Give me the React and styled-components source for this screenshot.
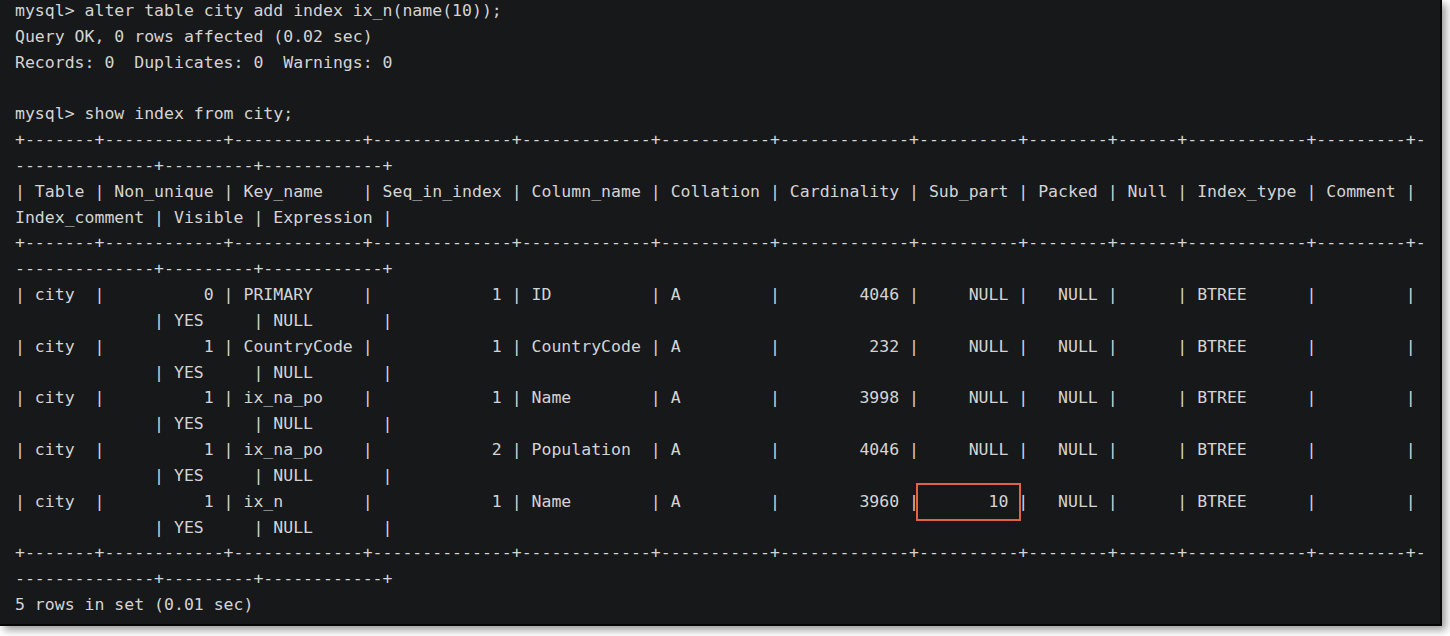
import React from "react";
import styled, { createGlobalStyle } from "styled-components";

const Global = createGlobalStyle`
  html, body { margin: 0; padding: 0; background: #ffffff; }
  body { width: 1450px; height: 636px; overflow: hidden; }
`;

const Terminal = styled.div`
  width: 1440px;
  height: 624px;
  background: #17181a;
  border-right: 2px solid #060606;
  border-bottom: 2px solid #060606;
  box-shadow: 4px 4px 8px rgba(0, 0, 0, 0.4);
  overflow: hidden;
  box-sizing: content-box;
`;

const Screen = styled.div`
  margin-top: -2px;
  padding-left: 15px;
  font-family: "DejaVu Sans Mono", "Liberation Mono", monospace;
  font-size: 16.5px;
  line-height: 25.83px;
  color: #d4d4d4;
`;

const Line = styled.div`
  height: 25.83px;
  white-space: pre;
`;

const Mark = styled.span`
  position: relative;
  display: inline-block;
  &::after {
    content: "";
    position: absolute;
    left: -3px;
    right: -3px;
    top: -6px;
    bottom: -6px;
    border: 2px solid #e0643f;
  }
`;

const COLS = [
  ["Table", "l"],
  ["Non_unique", "r"],
  ["Key_name", "l"],
  ["Seq_in_index", "r"],
  ["Column_name", "l"],
  ["Collation", "l"],
  ["Cardinality", "r"],
  ["Sub_part", "r"],
  ["Packed", "r"],
  ["Null", "l"],
  ["Index_type", "l"],
  ["Comment", "l"],
  ["Index_comment", "l"],
  ["Visible", "l"],
  ["Expression", "l"],
];

const ROWS = [
  ["city", "0", "PRIMARY", "1", "ID", "A", "4046", "NULL", "NULL", "", "BTREE", "", "", "YES", "NULL"],
  ["city", "1", "CountryCode", "1", "CountryCode", "A", "232", "NULL", "NULL", "", "BTREE", "", "", "YES", "NULL"],
  ["city", "1", "ix_na_po", "1", "Name", "A", "3998", "NULL", "NULL", "", "BTREE", "", "", "YES", "NULL"],
  ["city", "1", "ix_na_po", "2", "Population", "A", "4046", "NULL", "NULL", "", "BTREE", "", "", "YES", "NULL"],
  ["city", "1", "ix_n", "1", "Name", "A", "3960", "10", "NULL", "", "BTREE", "", "", "YES", "NULL"],
];

const WRAP = 142;

const widths = COLS.map(([h], i) =>
  Math.max(h.length, ...ROWS.map((r) => r[i].length))
);

const border = "+" + widths.map((w) => "-".repeat(w + 2)).join("+") + "+";

const rowLine = (cells, header) =>
  "|" +
  cells
    .map((c, i) => {
      const w = widths[i];
      const right = !header && COLS[i][1] === "r";
      return " " + (right ? c.padStart(w) : c.padEnd(w)) + " ";
    })
    .join("|") +
  "|";

const wrap = (s) => [s.slice(0, WRAP), s.slice(WRAP)];

const lines = [
  { t: "mysql> alter table city add index ix_n(name(10));" },
  { t: "Query OK, 0 rows affected (0.02 sec)" },
  { t: "Records: 0  Duplicates: 0  Warnings: 0" },
  { t: "" },
  { t: "mysql> show index from city;" },
  ...wrap(border).map((t) => ({ t })),
  ...wrap(rowLine(COLS.map((c) => c[0]), true)).map((t) => ({ t })),
  ...wrap(border).map((t) => ({ t })),
  ...ROWS.flatMap((r, ri) =>
    wrap(rowLine(r, false)).map((t, k) => ({
      t,
      mark: ri === ROWS.length - 1 && k === 0,
    }))
  ),
  ...wrap(border).map((t) => ({ t })),
  { t: "5 rows in set (0.01 sec)" },
];

// start index of Sub_part cell interior
const subStart = 1 + widths.slice(0, 7).reduce((a, w) => a + w + 3, 0);
const subEnd = subStart + widths[7] + 2;

export default function App() {
  return (
    <>
      <Global />
      <Terminal>
        <Screen>
          {lines.map((l, i) =>
            l.mark ? (
              <Line key={i}>
                {l.t.slice(0, subStart)}
                <Mark>{l.t.slice(subStart, subEnd)}</Mark>
                {l.t.slice(subEnd)}
              </Line>
            ) : (
              <Line key={i}>{l.t}</Line>
            )
          )}
        </Screen>
      </Terminal>
    </>
  );
}
